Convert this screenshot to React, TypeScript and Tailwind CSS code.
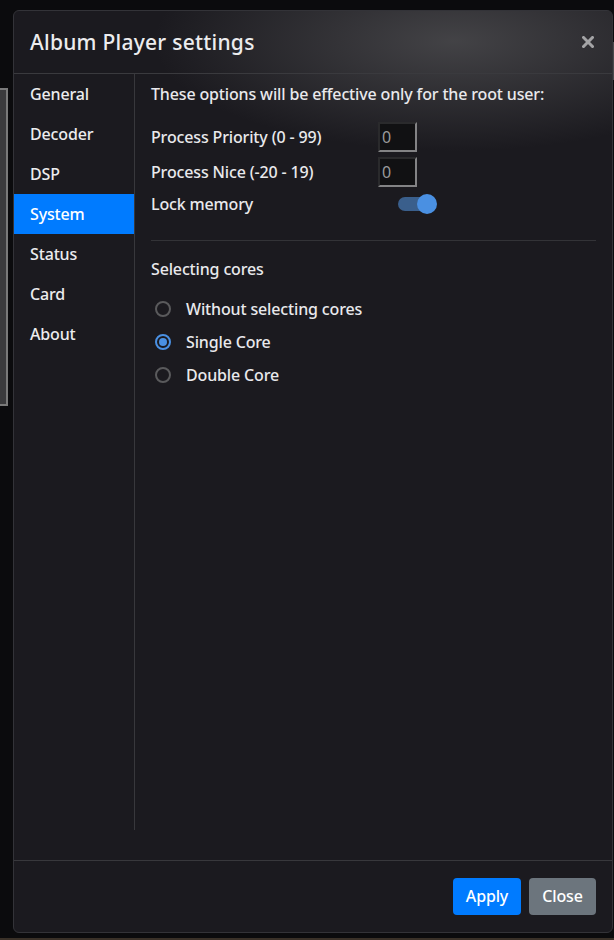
import { useState } from 'react'

const tabs = ['General', 'Decoder', 'DSP', 'System', 'Status', 'Card', 'About']
const cores = ['Without selecting cores', 'Single Core', 'Double Core']

export default function App() {
  const [active, setActive] = useState('System')
  const [core, setCore] = useState('Single Core')
  const [lock, setLock] = useState(true)

  return (
    <div
      className="relative h-[940px] w-[614px] overflow-hidden bg-[#0b0b0d] text-[#e9e9ec]"
      style={{ fontFamily: '"Noto Sans", "Open Sans", sans-serif' }}
    >
      {/* page content behind the dialog */}
      <div className="absolute left-0 top-[88px] h-[318px] w-[8px] border-2 border-l-0 border-[#7a7a7a] bg-[#3b3b3d]" />
      <div className="absolute right-0 top-[42px] h-[38px] w-[2px] bg-[#4a4a4c]" />
      <div className="absolute bottom-0 left-0 h-[2px] w-full bg-[#3a3128]" />

      {/* Dialog */}
      <div className="relative ml-[13px] mt-[10px] flex h-[923px] w-[600px] flex-col overflow-hidden rounded-[6px] border border-[#333338] bg-[#1b1a1f]">
        <div className="pointer-events-none absolute inset-0 bg-[radial-gradient(ellipse_300px_110px_at_440px_30px,rgba(100,100,102,0.55),rgba(27,26,31,0))]" />

        {/* Header */}
        <div className="relative flex h-[63px] shrink-0 items-center justify-between border-b border-[#3a3a3e] pl-[16px] pr-[18px]">
          <h2 className="text-[21px] font-medium leading-none tracking-[0.25px] text-[#ececee]">Album Player settings</h2>
          <button className="text-[#a4a4a6]">
            <svg width="12" height="12" viewBox="0 0 12 12">
              <path d="M1.5 1.5 L10.5 10.5 M10.5 1.5 L1.5 10.5" stroke="currentColor" strokeWidth="3" strokeLinecap="square" />
            </svg>
          </button>
        </div>

        {/* Body */}
        <div className="relative flex flex-1 pb-[30px] tracking-[-0.15px]">
          <nav className="w-[121px] shrink-0 border-r border-[#38383c]">
            {tabs.map((t) => (
              <button
                key={t}
                onClick={() => setActive(t)}
                className={`block h-[40px] w-full pl-[16px] text-left text-[16px] font-medium ${
                  active === t ? 'bg-[#007bff] text-white' : 'text-[#ececee]'
                }`}
              >
                {t}
              </button>
            ))}
          </nav>

          <div className="flex-1 pl-[16px] pr-[16px] pt-[8px]">
            <p className="text-[16px] font-medium leading-[24px]">These options will be effective only for the root user:</p>

            <div className="mt-[16px] flex h-[30px] items-center">
              <span className="w-[227px] text-[16px] font-medium">Process Priority (0 - 99)</span>
              <input
                defaultValue="0"
                className="h-[30px] w-[39px] border-2 border-t-[#2a2a2c] border-l-[#2a2a2c] border-b-[#838385] border-r-[#838385] bg-[#111113] px-[2px] text-[16px] text-[#9a9a9c] outline-none"
              />
            </div>
            <div className="mt-[5px] flex h-[30px] items-center">
              <span className="w-[227px] text-[16px] font-medium">Process Nice (-20 - 19)</span>
              <input
                defaultValue="0"
                className="h-[30px] w-[39px] border-2 border-t-[#2a2a2c] border-l-[#2a2a2c] border-b-[#838385] border-r-[#838385] bg-[#111113] px-[2px] text-[16px] text-[#9a9a9c] outline-none"
              />
            </div>
            <div className="mt-[5px] flex h-[24px] items-center">
              <span className="w-[247px] text-[16px] font-medium">Lock memory</span>
              <button onClick={() => setLock(!lock)} className="relative h-[20px] w-[40px]">
                <span className="absolute left-0 top-[3px] h-[14px] w-[36px] rounded-full bg-[#3a5f8c]" />
                <span
                  className={`absolute top-0 h-[20px] w-[20px] rounded-full ${lock ? 'left-[19px] bg-[#4a90e2]' : 'left-0 bg-[#8a8a8c]'}`}
                />
              </button>
            </div>

            <div className="mt-[24px] h-px bg-[#333337]" />

            <p className="mt-[16px] text-[16px] font-medium leading-[24px]">Selecting cores</p>

            <div className="mt-[11px] flex flex-col">
              {cores.map((c) => (
                <label key={c} className="flex h-[33px] cursor-pointer items-center" onClick={() => setCore(c)}>
                  <span
                    className={`ml-[4px] flex h-[16px] w-[16px] items-center justify-center rounded-full border-2 ${
                      core === c ? 'border-[#4a90e2]' : 'border-[#5a5a5c]'
                    }`}
                  >
                    {core === c && <span className="h-[8px] w-[8px] rounded-full bg-[#4a90e2]" />}
                  </span>
                  <span className="ml-[15px] text-[16px] font-medium">{c}</span>
                </label>
              ))}
            </div>
          </div>
        </div>

        {/* Footer */}
        <div className="flex h-[72px] shrink-0 items-center justify-end gap-[8px] border-t border-[#38383c] pr-[16px]">
          <button className="h-[37px] w-[68px] rounded-[4px] bg-[#007bff] pb-[2px] text-[16px] font-medium tracking-[-0.15px] text-white">Apply</button>
          <button className="h-[37px] w-[67px] rounded-[4px] bg-[#6c757d] pb-[2px] text-[16px] font-medium tracking-[-0.15px] text-white">Close</button>
        </div>
      </div>
    </div>
  )
}
